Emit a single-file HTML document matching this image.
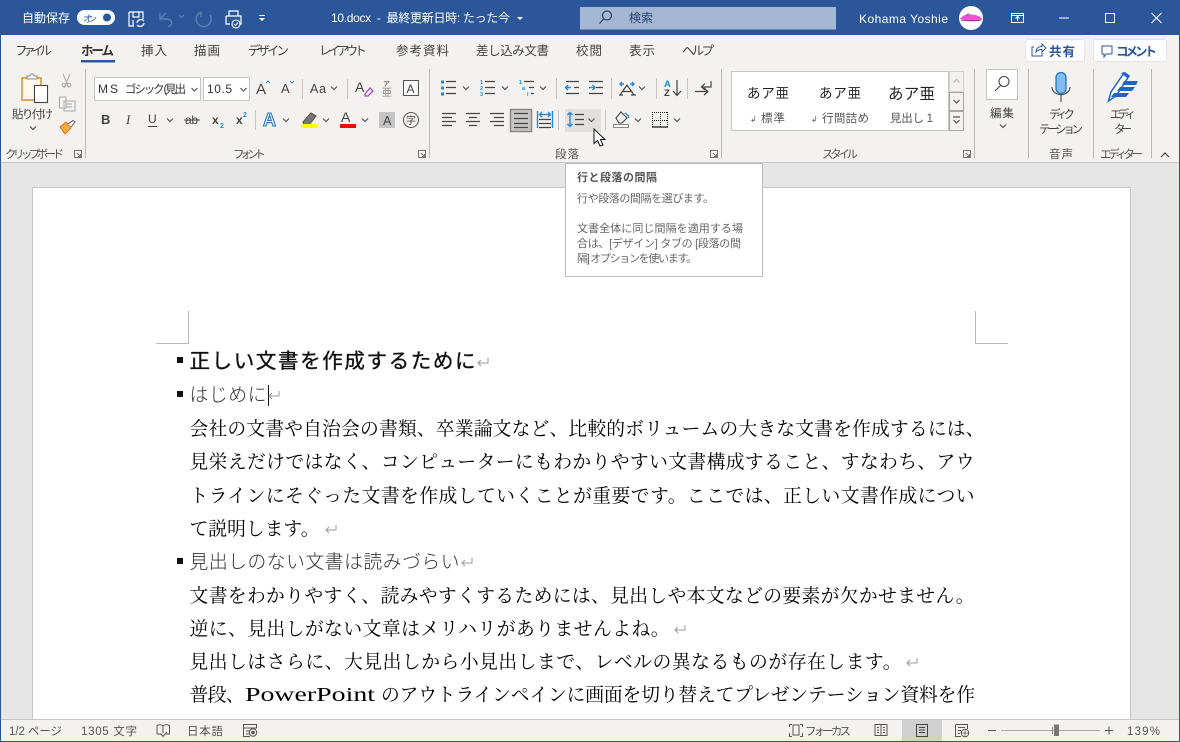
<!DOCTYPE html>
<html lang="ja"><head><meta charset="utf-8"><title>10.docx</title>
<style>
html,body{margin:0;padding:0;width:1180px;height:742px;overflow:hidden;background:#e6e6e6}
svg{display:block;position:absolute;left:0;top:0}
text{font-family:"Liberation Sans","Noto Sans CJK JP",sans-serif;font-size:12px;fill:#444;white-space:pre}
.t{fill:#fff}
.tab{font-size:12.5px;fill:#444}
.r{font-size:11.5px;fill:#444}
.g{font-size:11.5px;fill:#555}
.s{font-size:11.5px;fill:#555}
.d{font-family:"Liberation Serif","Noto Serif CJK JP","Noto Serif CJK SC",serif;font-size:18.8px;fill:#000}
.h{font-family:"Liberation Sans","Noto Sans CJK JP",sans-serif;font-size:18.8px;font-weight:300;fill:#333}
.tp{font-size:11px;fill:#666}
.ln{stroke:#444;stroke-width:1.2;fill:none}
.bl{stroke:#2b88d8;stroke-width:1.4;fill:none}
.ch{stroke:#555;stroke-width:1.2;fill:none}
.sep{stroke:#c8c6c4;stroke-width:1}
.gs{stroke:#b9b7b5;stroke-width:1}
.rt{stroke:#999;stroke-width:1;fill:none}
</style></head><body>
<svg width="1180" height="742" viewBox="0 0 1180 742" xmlns="http://www.w3.org/2000/svg">
<defs>
<g id="chev"><path class="ch" d="M-3 -1.5L0 1.5L3 -1.5"/></g>
<g id="lau"><path d="M-3.5 -3.5H3.5V3.5H-3.5Z M-1 -1L2.500 2.500M2.500 0V2.500H0" fill="none" stroke="#777" stroke-width="1"/></g>
<g id="ret"><path class="rt" d="M11 -6V-1H1M4 -4L1 -1L4 2"/></g>
</defs>

<!-- backgrounds -->
<rect width="1180" height="742" fill="#e6e6e6"/>
<rect y="0" width="1180" height="35" fill="#2b579a"/>
<rect y="35" width="1180" height="127" fill="#f3f2f1"/>
<rect y="162" width="1180" height="1" fill="#c8c6c4"/>
<rect x="32.500" y="187.500" width="1098" height="532" fill="#fff" stroke="#c6c6c6"/>
<rect y="719" width="1180" height="22" fill="#f3f2f1"/>
<rect y="719" width="1180" height="1" fill="#c8c6c4"/>
<rect y="741" width="1180" height="1" fill="#2b579a"/>
<rect x="0" y="0" width="1" height="742" fill="#2b579a"/>
<rect x="1179" y="0" width="1" height="742" fill="#2b579a"/>

<!-- title bar -->
<text class="t" x="22" y="22" textLength="48">自動保存</text>
<rect x="77" y="10" width="38" height="15" rx="7.5" fill="#fff"/>
<text x="83" y="22" style="font-size:9px;fill:#2b579a" textLength="14">オン</text>
<circle cx="107" cy="17.5" r="4" fill="#2b579a"/>
<path d="M129 12H143V19M129 12V26H134M133 12V17H139V12M133 26V20" fill="none" stroke="#fff" stroke-width="1.2"/>
<path d="M137 23a4 4 0 0 1 7-2M144 23a4 4 0 0 1-7 2" fill="none" stroke="#fff" stroke-width="1.2"/>
<path d="M160 13V19H166C172 19 174 24 168 27M160 19L166 13" fill="none" stroke="#5b80b8" stroke-width="1.4"/>
<path d="M179 15l2.5 2.5l2.5-2.5" fill="none" stroke="#5b80b8" stroke-width="1.2"/>
<path d="M201 12a7.5 7.5 0 1 0 9 3M201 12l0 5" fill="none" stroke="#5b80b8" stroke-width="1.4"/>
<path d="M229 16V11H238V16M226 16H241V24H236M226 16V24H230" fill="none" stroke="#fff" stroke-width="1.2"/>
<circle cx="236" cy="24" r="4" fill="#2b579a" stroke="#fff" stroke-width="1.1"/>
<path d="M234 24l1.5 1.5l2.5-3" fill="none" stroke="#fff"/>
<path d="M259 15.500H265" stroke="#fff"/><path d="M259 18H265L262 21Z" fill="#fff"/>
<text class="t" x="331" y="22" textLength="179">10.docx  -  最終更新日時: たった今</text>
<path d="M517 17H523L520 20Z" fill="#fff"/>
<rect x="580" y="7" width="256" height="22.500" fill="#a3b7d2"/>
<circle cx="607" cy="15.500" r="4.500" fill="none" stroke="#26426e" stroke-width="1.200"/>
<path d="M603.500 19L599.500 23.500" stroke="#26426e" stroke-width="1.200"/>
<text x="629" y="22" style="fill:#26426e" textLength="24">検索</text>
<text class="t" x="859" y="23" textLength="89">Kohama Yoshie</text>
<circle cx="971" cy="18" r="12" fill="#fff"/>
<path d="M960 18.500C963 15 968 13.500 972 14.500C977 15 982 17 982 19.500C979 22 964 22.500 960 18.500Z" fill="#f24fd8"/>
<path d="M966 15.500l3-2M961 20.500H981" stroke="#333" stroke-width=".6"/>
<path d="M1011.500 13.500H1023.500V22.500H1011.500ZM1011.500 15.500H1023.500M1017.500 21V17M1015.500 18.500l2-2l2 2" fill="none" stroke="#fff"/>
<path d="M1059 18H1069" stroke="#fff"/>
<rect x="1105.500" y="13.500" width="9" height="9" fill="none" stroke="#fff"/>
<path d="M1151.500 13L1161.500 23M1161.500 13L1151.500 23" stroke="#fff"/>

<!-- tabs -->
<text class="tab" x="15" y="55" textLength="37">ファイル</text>
<text class="tab" x="81" y="55" textLength="33" style="font-weight:700;fill:#333">ホーム</text>
<rect x="81" y="60" width="34" height="2.500" fill="#2b579a"/>
<text class="tab" x="141" y="55" textLength="26">挿入</text>
<text class="tab" x="194" y="55" textLength="26">描画</text>
<text class="tab" x="248" y="55" textLength="41">デザイン</text>
<text class="tab" x="319" y="55" textLength="48">レイアウト</text>
<text class="tab" x="396" y="55" textLength="53">参考資料</text>
<text class="tab" x="476" y="55" textLength="73">差し込み文書</text>
<text class="tab" x="576" y="55" textLength="26">校閲</text>
<text class="tab" x="629" y="55" textLength="26">表示</text>
<text class="tab" x="682" y="55" textLength="32">ヘルプ</text>

<rect x="1025.500" y="39.500" width="59" height="22" rx="2" fill="#fff" stroke="#e6e4e2"/>
<path d="M1034 47H1032V56H1042V52M1036 52C1036 48 1039 46.500 1042 46.500V44L1046 48L1042 52V49.500C1039.500 49.500 1037.500 50 1036 52Z" fill="none" stroke="#2b579a"/>
<text x="1049" y="56" style="font-size:12.500px;font-weight:700;fill:#2b579a" textLength="26">共有</text>
<rect x="1093.500" y="39.500" width="73" height="22" rx="2" fill="#fff" stroke="#e6e4e2"/>
<path d="M1102 46H1112V54H1106L1104 57V54H1102Z" fill="none" stroke="#2b579a"/>
<text x="1116" y="56" style="font-size:12.500px;font-weight:700;fill:#2b579a" textLength="41">コメント</text>

<!-- group separators -->
<path class="gs" d="M85.500 69V158M429.500 69V158M721.500 69V158M974.500 69V158M1028.500 69V158M1093.500 69V158M1151.500 69V158"/>

<!-- clipboard -->
<path d="M22 78H41V100H22Z" fill="#fcf8ef" stroke="#d98a21" stroke-width="1.400"/>
<path d="M27 79V76H30C30 73 34 73 34 76H37V79Z" fill="#fff" stroke="#888"/>
<rect x="34.500" y="85.500" width="13" height="17" fill="#fff" stroke="#444" stroke-width="1.100"/>
<text class="r" x="12" y="118" textLength="41">貼り付け</text>
<use href="#chev" x="33" y="128"/>
<path d="M63 74L69 88M70 74L64 88" stroke="#aaa" fill="none"/><circle cx="64" cy="85" r="1.800" fill="none" stroke="#aaa"/><circle cx="69" cy="85" r="1.800" fill="none" stroke="#aaa"/>
<path d="M59.500 97H66V108H59.500ZM64 101H75V111H64Z" fill="#f3f2f1" stroke="#aaa"/>
<path d="M66 104H72M66 107H72" stroke="#aaa"/>
<path d="M60 127L66 122L71 128L65 134Z" fill="#f3a94a" stroke="#d9791a"/>
<path d="M68 124L73 120.500L75 122L71 127" fill="#fff" stroke="#555"/>
<text class="g" x="5" y="158" textLength="59">クリップボード</text>
<use href="#lau" x="78" y="154"/>

<!-- font -->
<rect x="94.500" y="77.500" width="106" height="23" fill="#fff" stroke="#c8c6c4"/>
<text x="98" y="93" textLength="20" style="fill:#333">M S</text>
<text x="125" y="93" textLength="61" style="fill:#333;font-size:11.500px">ゴシック (見出</text>
<use href="#chev" x="194.500" y="89.500"/>
<rect x="203.500" y="77.500" width="46" height="23" fill="#fff" stroke="#c8c6c4"/>
<text x="207" y="93" textLength="25" style="fill:#333">10.5</text>
<use href="#chev" x="243.500" y="89.500"/>
<text x="256" y="94" style="font-size:15px" >A</text><path d="M266 83l2-2l2 2" fill="none" stroke="#2b88d8"/>
<text x="281" y="93" style="font-size:13px">A</text><path d="M290 81l2 2l2-2" fill="none" stroke="#2b88d8"/>
<path class="sep" d="M302.500 79V99"/>
<text x="310" y="93" textLength="16" style="font-size:12.500px">Aa</text><use href="#chev" x="334" y="88"/>
<path class="sep" d="M347.500 79V99"/>
<text x="355" y="92" style="font-size:14px">A</text>
<path d="M365 94L370 88L373 91L368 96L365 96Z" fill="#f3f2f1" stroke="#a64cb5" stroke-width="1.300"/>
<text x="383" y="86" style="font-size:7px">ア</text><text x="382" y="96" style="font-size:10px;fill:#888">亜</text>
<rect x="403.500" y="80.500" width="15" height="15" fill="#fafafa" stroke="#555"/><text x="406.500" y="93" style="font-size:12px">A</text>

<text x="101" y="124" style="font-size:13px;font-weight:700">B</text>
<text x="126" y="124" style="font-family:'Liberation Serif',serif;font-size:13px;font-style:italic">I</text>
<text x="148" y="123" style="font-size:12px">U</text><path d="M148 126.500H157" stroke="#444"/>
<use href="#chev" x="170" y="120"/>
<text x="185" y="124" style="font-size:12px" textLength="13">ab</text><path d="M184 120H200" stroke="#444"/>
<text x="212" y="124" style="font-size:12px;font-weight:700">x</text><text x="220" y="128" style="font-size:7px;fill:#2b88d8;font-weight:700">2</text>
<text x="236" y="124" style="font-size:12px;font-weight:700">x</text><text x="243" y="117" style="font-size:7px;fill:#2b88d8;font-weight:700">2</text>
<path class="sep" d="M255.500 110V130"/>
<text x="263" y="126" style="font-size:18px;font-weight:700;fill:#fff;stroke:#1f73c0;stroke-width:1.100">A</text>
<use href="#chev" x="286" y="120"/>
<path d="M303 122L311 113L316 116L309 125H304Z" fill="#777" stroke="#555" stroke-width="1.100"/>
<rect x="301" y="124" width="16" height="4" fill="#ffff00"/>
<use href="#chev" x="326" y="120"/>
<text x="341" y="122" style="font-size:14px">A</text><rect x="340" y="124" width="16" height="4" fill="#ff0000"/>
<use href="#chev" x="365" y="120"/>
<rect x="379" y="112" width="16" height="16" fill="#c4c4c4"/><text x="383" y="125" style="font-size:12.500px">A</text>
<circle cx="411" cy="120" r="7.500" fill="none" stroke="#555"/><text x="406" y="124" style="font-size:10px">字</text>
<text class="g" x="233" y="158" textLength="33">フォント</text>
<use href="#lau" x="422" y="154"/>

<!-- paragraph row 1 -->
<g fill="#1f88d0"><rect x="441" y="80.500" width="3" height="3"/><rect x="441" y="86.500" width="3" height="3"/><rect x="441" y="92.500" width="3" height="3"/></g>
<path class="ln" d="M446 81.500H456M446 87.500H456M446 93.500H456"/>
<use href="#chev" x="466" y="88"/>
<text x="480" y="84" style="font-size:5.500px;fill:#1f88d0;font-weight:700">1</text><text x="480" y="90" style="font-size:5.500px;fill:#1f88d0;font-weight:700">2</text><text x="480" y="96" style="font-size:5.500px;fill:#1f88d0;font-weight:700">3</text>
<path class="ln" d="M485 81.500H495M485 87.500H495M485 93.500H495"/>
<use href="#chev" x="505" y="88"/>
<text x="519" y="84" style="font-size:5.500px;fill:#1f88d0;font-weight:700">1</text><text x="522" y="90" style="font-size:5.500px;fill:#1f88d0;font-weight:700">a</text><text x="527" y="96" style="font-size:5.500px;fill:#1f88d0;font-weight:700">i</text>
<path class="ln" d="M524 81.500H534M529 87.500H534M531 93.500H534"/>
<use href="#chev" x="543" y="88"/>
<path class="sep" d="M556.500 78V99"/>
<path class="ln" d="M566 81.500H579M574 87.500H579M566 93.500H579"/><path class="bl" d="M571 87.500H565M568 85L565.500 87.500L568 90"/>
<path class="ln" d="M589 81.500H603M596 87.500H603M589 93.500H603"/><path class="bl" d="M589 87.500H595M592.500 85L595 87.500L592.500 90"/>
<path class="sep" d="M611.500 78V99"/>
<path class="bl" d="M620 84H624M622 82L620 84L622 86M630 84H634M632 82L634 84L632 86"/>
<path d="M620 95L627 85L634 95M623 91.500H631M619 95H623M631 95H636" fill="none" stroke="#444" stroke-width="1.200"/>
<use href="#chev" x="642" y="88"/>
<path class="sep" d="M656.500 78V99"/>
<text x="664" y="87" style="font-size:9.500px;font-weight:700;fill:#1f88d0">A</text><text x="664" y="96" style="font-size:9.500px;fill:#444;font-weight:700">Z</text>
<path class="ln" d="M677 80V95M673 91L677 95.500L681 91"/>
<path class="sep" d="M687.500 78V99"/>
<path class="ln" d="M695 91.500H707M704 88L708 91.500L704 95M711 81V87H702M705 83.500L701.500 87L705 90"/>

<!-- paragraph row 2 -->
<path class="ln" d="M442 113.500H456M442 117.500H452M442 121.500H456M442 125.500H452"/>
<path class="ln" d="M466 113.500H480M469 117.500H477M466 121.500H480M469 125.500H477"/>
<path class="ln" d="M490 113.500H504M494 117.500H504M490 121.500H504M494 125.500H504"/>
<rect x="510.500" y="109.500" width="21" height="22" fill="#c8c6c4" stroke="#8a8886" stroke-width="1.500"/>
<path class="ln" d="M514 113.500H528M514 118.500H528M514 123.500H528M514 127.500H528"/>
<path class="bl" d="M537.500 111V128M552.500 111V128M540 114.500H550M542 112L539.500 114.500L542 117M548 112L550.500 114.500L548 117"/>
<path class="ln" d="M539 119.500H551M539 123.500H551M539 127.500H551"/>
<path class="sep" d="M558.500 110V130"/>
<rect x="565" y="109" width="36" height="23" fill="#e1e0df"/>
<path class="bl" d="M570 113V126M567.500 115L570 112.500L572.500 115M567.500 124L570 126.500L572.500 124"/>
<path class="ln" d="M575 114.500H584M575 119.500H584M575 124.500H584"/>
<use href="#chev" x="591.500" y="120"/>
<path class="sep" d="M605.500 110V130"/>
<path d="M616 118L621 112L627 118L622 123H619Z" fill="#f3f2f1" stroke="#444" stroke-width="1.100"/>
<path d="M625 113C628 115 629 116 628.500 118" class="bl"/>
<rect x="613.500" y="124.500" width="15" height="3" fill="#fff" stroke="#888"/>
<use href="#chev" x="638" y="120"/>
<path d="M652 112.500H668M652.500 112V127M667.500 112V127M652 120.500H668M660.500 112V127" fill="none" stroke="#222" stroke-dasharray="1 1"/>
<path d="M652 127H668" stroke="#111" stroke-width="1.200"/>
<use href="#chev" x="677" y="120"/>
<text class="g" x="555" y="158" textLength="24">段落</text>
<use href="#lau" x="714" y="154"/>

<!-- styles -->
<rect x="731.500" y="71.500" width="217" height="59" fill="#fff" stroke="#c8c6c4"/>
<text x="747" y="98" style="font-size:13.500px;fill:#222" textLength="42">あア亜</text>
<text x="819" y="98" style="font-size:13.500px;fill:#222" textLength="42">あア亜</text>
<text x="888" y="99" style="font-size:15.500px;fill:#222" textLength="47">あア亜</text>
<text x="750" y="122" class="s" style="font-size:8px">↲</text><text x="761" y="122" class="s" textLength="24">標準</text>
<text x="811" y="122" class="s" style="font-size:8px">↲</text><text x="822" y="122" class="s" textLength="47">行間詰め</text>
<text x="890" y="122" class="s" textLength="43">見出し 1</text>
<rect x="949.500" y="71.500" width="14" height="20" fill="#f3f2f1" stroke="#d5d3d1"/>
<path d="M953.500 82.500L956.500 79.500L959.500 82.500" fill="none" stroke="#bbb" stroke-width="1.200"/>
<rect x="949.500" y="92.500" width="14" height="18" fill="#f3f2f1" stroke="#a8a6a4"/>
<use href="#chev" x="956.500" y="101.500"/>
<rect x="949.500" y="111.500" width="14" height="19" fill="#f3f2f1" stroke="#a8a6a4"/>
<path class="ch" d="M953 117H960M953.500 120L956.500 123L959.500 120"/>
<text class="g" x="822" y="158" textLength="36">スタイル</text>
<use href="#lau" x="967" y="154"/>

<!-- edit -->
<rect x="986.500" y="69.500" width="31" height="30" fill="#fff" stroke="#c8c6c4"/>
<circle cx="1004" cy="81.500" r="5" fill="none" stroke="#444" stroke-width="1.100"/>
<path d="M1000.500 85.500L995 91" stroke="#444" stroke-width="1.100"/>
<text class="r" x="990" y="117" textLength="24">編集</text>
<use href="#chev" x="1003" y="126"/>

<!-- dictate -->
<rect x="1056" y="72.500" width="10" height="21" rx="5" fill="#83bcec" stroke="#1f78c8" stroke-width="1.300"/>
<path d="M1052 87C1052 97 1070 97 1070 87M1061 95V102" fill="none" stroke="#555" stroke-width="1.200"/>
<text class="r" x="1049" y="118" textLength="26">ディク</text>
<text class="r" x="1039" y="133" textLength="44">テーション</text>
<text class="g" x="1049" y="158" textLength="24">音声</text>

<!-- editor -->
<path d="M1108.500 101L1111 92L1124 73L1129 76L1116 96Z" fill="#fff" stroke="#1f66c8" stroke-width="1.500"/>
<path d="M1121 73L1125 72L1129 75L1127 78Z" fill="#1f66c8"/>
<path d="M1124 81H1138L1136 85H1122ZM1120 87H1135L1132 91H1117ZM1114 93H1129L1126 97H1111Z" fill="#1f66c8"/>
<text class="r" x="1110" y="118" textLength="26">エディ</text>
<text class="r" x="1114" y="133" textLength="18">ター</text>
<text class="g" x="1100" y="158" textLength="43">エディター</text>
<path d="M1161 157L1165 153L1169 157" fill="none" stroke="#444" stroke-width="1.200"/>

<!-- cursor -->
<path d="M594 129V143.500L597.500 140.500L600 146L603 145L600.500 139.500H605Z" fill="#fff" stroke="#111"/>

<!-- tooltip -->
<rect x="565.500" y="163.500" width="197" height="113" fill="#fff" stroke="#bdbdbd"/>
<text x="577" y="181" style="font-size:11px;font-weight:700;fill:#555" textLength="80">行と段落の間隔</text>
<text class="tp" x="577" y="202" textLength="137">行や段落の間隔を選びます。</text>
<text class="tp" x="577" y="232" textLength="166">文書全体に同じ間隔を適用する場</text>
<text class="tp" x="577" y="247" textLength="164">合は、[デザイン] タブの [段落の間</text>
<text class="tp" x="577" y="262" textLength="120">隔] オプションを使います。</text>

<!-- crop marks -->
<path d="M188.500 311V343.500H156M975.500 311V343.500H1008" fill="none" stroke="#b8b8b8"/>

<!-- document -->
<rect x="177" y="357" width="6" height="6" fill="#111"/>
<text class="h" x="189.500" y="368" style="font-size:20.500px;font-weight:400;fill:#111;stroke:#111;stroke-width:.35" textLength="286">正しい文書を作成するために</text>
<use href="#ret" x="477" y="364"/>
<rect x="177" y="391" width="6" height="6" fill="#111"/>
<text class="h" x="189.500" y="401" textLength="77">はじめに</text>
<rect x="268" y="385" width="1" height="21" fill="#111"/>
<use href="#ret" x="268" y="397"/>
<text class="d" x="189.500" y="435" textLength="795">会社の文書や自治会の書類、卒業論文など、比較的ボリュームの大きな文書を作成するには、</text>
<text class="d" x="189.500" y="468" textLength="785">見栄えだけではなく、コンピューターにもわかりやすい文書構成すること、すなわち、アウ</text>
<text class="d" x="189.500" y="502" textLength="785">トラインにそぐった文書を作成していくことが重要です。ここでは、正しい文書作成につい</text>
<text class="d" x="189.500" y="535" textLength="130">て説明します。</text>
<use href="#ret" x="325" y="531"/>
<rect x="177" y="558" width="6" height="6" fill="#111"/>
<text class="h" x="189.500" y="568" textLength="270">見出しのない文書は読みづらい</text>
<use href="#ret" x="461" y="564"/>
<text class="d" x="189.500" y="602" textLength="785">文書をわかりやすく、読みやすくするためには、見出しや本文などの要素が欠かせません。</text>
<text class="d" x="189.500" y="635" textLength="480">逆に、見出しがない文章はメリハリがありませんよね。</text>
<use href="#ret" x="674" y="631"/>
<text class="d" x="189.500" y="668" textLength="712">見出しはさらに、大見出しから小見出しまで、レベルの異なるものが存在します。</text>
<use href="#ret" x="906" y="664"/>
<text class="d" x="189.500" y="701" textLength="55">普段、</text>
<text class="d" x="245" y="701" style="font-size:19.500px" textLength="130" lengthAdjust="spacingAndGlyphs">PowerPoint</text>
<text class="d" x="381" y="701" textLength="594">のアウトラインペインに画面を切り替えてプレゼンテーション資料を作</text>

<!-- status bar -->
<text class="s" x="9" y="735" textLength="53">1/2 ページ</text>
<text class="s" x="81" y="735" textLength="56">1305 文字</text>
<path d="M157 725.500C159 724.500 162 724.500 163 726C164 724.500 167 724.500 169.500 725.500V734H166M157 725.500V734H160.500M163 726V733M160.500 733.500L163 736.500L167 732" fill="none" stroke="#555"/>
<text class="s" x="187" y="735" textLength="36">日本語</text>
<path d="M243.500 724.500H256.500V728H243.500ZM243.500 728V736.500H250M246 731H250M246 734H249" fill="none" stroke="#555"/>
<circle cx="253" cy="732.500" r="3.700" fill="none" stroke="#555"/><circle cx="253" cy="732.500" r="1.800" fill="#555"/>
<path d="M789.500 727V724.500H792M800 724.500H802.500V727M789.500 733V736.500H792M800 736.500H802.500V733M793 725H799V735H793Z" fill="none" stroke="#555"/>
<text class="s" x="805" y="735" textLength="46">フォーカス</text>
<path d="M875 724.500H881V735.500H875ZM881 724.500H887V735.500H881ZM877 727.500H879M877 730H879M877 732.500H879M883 727.500H885M883 730H885M883 732.500H885" fill="none" stroke="#555"/>
<rect x="902" y="720" width="40" height="21" fill="#d0d0d0"/>
<path d="M916.500 724.500H927.500V736.500H916.500ZM919 727.500H925M919 730H925M919 732.500H925" fill="none" stroke="#444"/>
<path d="M955.500 724.500H967.500V729M955.500 724.500V736.500H961M958 727.500H965M958 730.500H961M958 733.500H960" fill="none" stroke="#555"/>
<circle cx="965" cy="733" r="3.800" fill="none" stroke="#555"/><path d="M961 733H969M965 729V737" stroke="#555" stroke-width=".7"/>
<path d="M988 730.500H996M1105 730.500H1113M1109 726.500V734.500" stroke="#555"/>
<path d="M1001 730.500H1100" stroke="#aaa"/>
<path d="M1052.500 727V734" stroke="#888"/>
<rect x="1054" y="724.500" width="5" height="11.500" fill="#777"/>
<text class="s" x="1127" y="735" textLength="33">139%</text>
</svg>
</body></html>
